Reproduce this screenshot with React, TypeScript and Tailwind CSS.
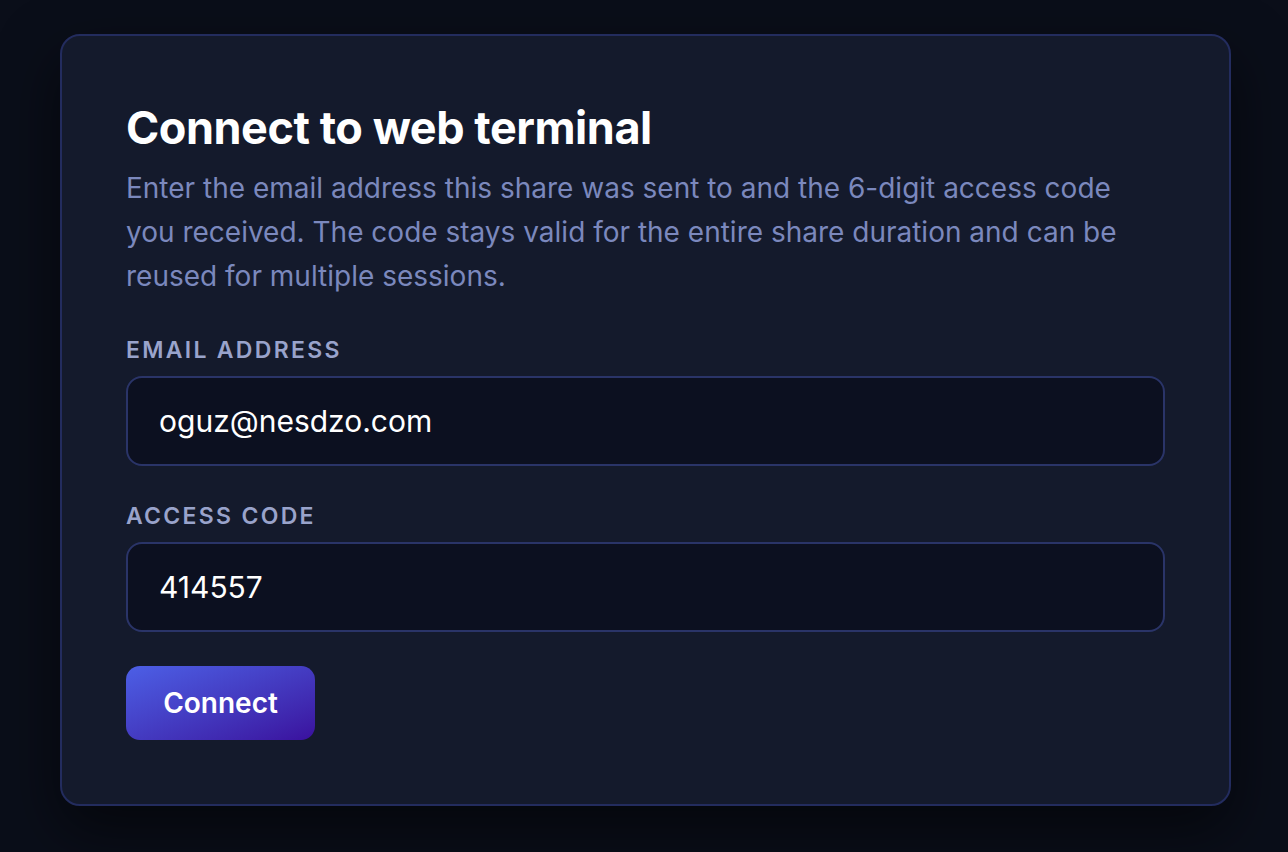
import React, { useState } from "react";

const App = () => {
    const [email, setEmail] = useState("oguz@nesdzo.com");
    const [code, setCode] = useState("414557");

    return (
        <main className="min-h-screen w-full bg-[#0a0e19] flex justify-center items-start pt-[34px] pl-[60px] pr-[57px] font-['Inter',sans-serif]">
            <section className="w-full rounded-[20px] border-2 border-[#232c5e] bg-[#141a2c] px-[64px] pt-[65px] pb-[64px] shadow-[0_24px_60px_rgba(0,0,0,0.55)]">
                <h1 className="text-[45px] font-bold leading-[54px] tracking-[-0.01em] text-white">
                    Connect to web terminal
                </h1>
                <p className="mt-[11px] text-[28px] leading-[44px] text-[#7b88bd]">
                    Enter the email address this share was sent to and the
                    6-digit access code you received. The code stays valid for
                    the entire share duration and can be reused for multiple
                    sessions.
                </p>

                <form
                    className="mt-[38px] flex flex-col"
                    onSubmit={(e) => e.preventDefault()}
                >
                    <label className="block text-[23px] font-semibold uppercase tracking-[0.1em] leading-[28px] text-[#99a3cb]">
                        Email address
                    </label>
                    <input
                        value={email}
                        onChange={(e) => setEmail(e.target.value)}
                        className="mt-[12px] h-[90px] w-full rounded-[16px] border-2 border-[#2a3468] bg-[#0c1020] px-[31px] text-[30px] text-white outline-none"
                    />

                    <label className="mt-[36px] block text-[23px] font-semibold uppercase tracking-[0.1em] leading-[28px] text-[#99a3cb]">
                        Access code
                    </label>
                    <input
                        value={code}
                        onChange={(e) => setCode(e.target.value)}
                        className="mt-[12px] h-[90px] w-full rounded-[16px] border-2 border-[#2a3468] bg-[#0c1020] px-[31px] text-[30px] text-white outline-none"
                    />

                    <div className="mt-[34px]">
                        <button
                            type="submit"
                            className="h-[74px] w-[189px] rounded-[14px] bg-gradient-to-br from-[#4c5fe6] to-[#3a0f9e] text-[28px] font-semibold text-white"
                        >
                            Connect
                        </button>
                    </div>
                </form>
            </section>
        </main>
    );
};

export default App;
